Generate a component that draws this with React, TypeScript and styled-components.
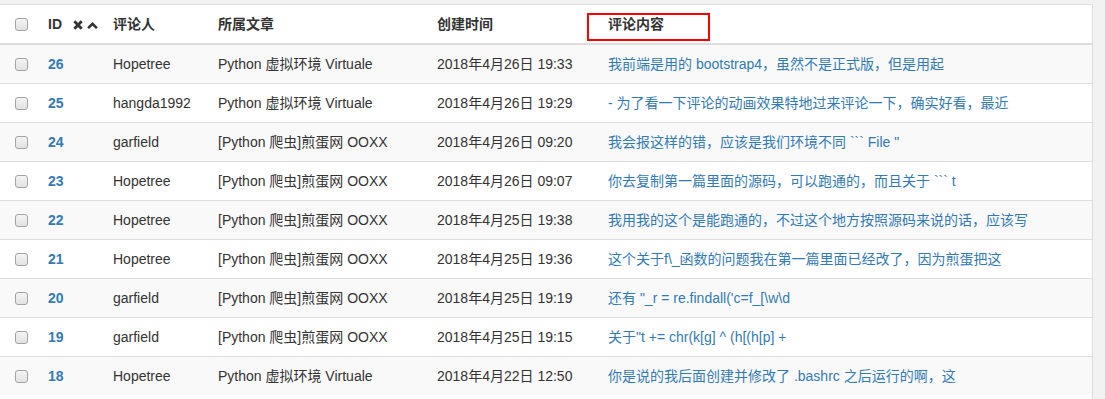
import React from "react";
import styled, { createGlobalStyle } from "styled-components";

const Global = createGlobalStyle`
  html, body { margin: 0; padding: 0; background: #f2f2f2; }
  body {
    font-family: "Liberation Sans", Arial, "Noto Sans CJK SC", sans-serif;
    font-size: 14px;
    color: #333;
  }
`;

const Page = styled.div`
  padding-top: 4px;
  width: 1105px;
  height: 399px;
  overflow: hidden;
  box-sizing: border-box;
`;

const Panel = styled.div`
  width: 1093px;
  background: #fff;
  border-top: 1px solid #ddd;
  border-right: 1px solid #ddd;
  box-sizing: border-box;
  min-height: 400px;
`;

const Table = styled.table`
  width: 1092px;
  border-collapse: separate;
  border-spacing: 0;
  table-layout: fixed;
`;

const Th = styled.th<{ $w?: number }>`
  position: relative;
  box-sizing: border-box;
  text-align: left;
  font-weight: bold;
  line-height: 20px;
  height: 40px;
  padding: 9px 8px;
  border-bottom: 2px solid #ddd;
  white-space: nowrap;
  vertical-align: middle;
  ${(p) => (p.$w ? `width: ${p.$w}px;` : "")}
`;

const Row = styled.tr<{ $striped: boolean }>`
  background: ${(p) => (p.$striped ? "#f9f9f9" : "#fff")};
`;

const Td = styled.td`
  box-sizing: border-box;
  height: 38px;
  padding: 9px 8px;
  line-height: 20px;
  white-space: nowrap;
  overflow: hidden;
  vertical-align: middle;
  tr + tr > & {
    border-top: 1px solid #ddd;
    height: 39px;
  }
`;

const CheckCell = styled(Td)`
  padding-left: 15px;
  padding-right: 0;
`;

const CheckTh = styled(Th)`
  padding-left: 15px;
  padding-right: 0;
`;

const Check = styled.span`
  display: block;
  width: 13px;
  height: 13px;
  box-sizing: border-box;
  border: 1px solid #a3a3a3;
  border-radius: 3px;
  background: linear-gradient(#f4f4f4, #e2e2e2);
`;

const IdLink = styled.a`
  color: #337ab7;
  font-weight: bold;
  text-decoration: none;
`;

const CommentLink = styled.a`
  color: #337ab7;
  text-decoration: none;
`;

const SortIcons = styled.span`
  display: inline-flex;
  align-items: center;
  gap: 4px;
  margin-left: 11px;
  vertical-align: -1px;
`;

const Highlight = styled.div`
  position: absolute;
  left: -13px;
  top: 8px;
  width: 123px;
  height: 28px;
  border: 2px solid #f00;
  box-sizing: border-box;
  pointer-events: none;
`;

const rows = [
  { id: 26, user: "Hopetree", art: "Python 虚拟环境 Virtuale", time: "2018年4月26日 19:33", text: "我前端是用的 bootstrap4，虽然不是正式版，但是用起" },
  { id: 25, user: "hangda1992", art: "Python 虚拟环境 Virtuale", time: "2018年4月26日 19:29", text: "- 为了看一下评论的动画效果特地过来评论一下，确实好看，最近" },
  { id: 24, user: "garfield", art: "[Python 爬虫]煎蛋网 OOXX", time: "2018年4月26日 09:20", text: "我会报这样的错，应该是我们环境不同 ``` File \"" },
  { id: 23, user: "Hopetree", art: "[Python 爬虫]煎蛋网 OOXX", time: "2018年4月26日 09:07", text: "你去复制第一篇里面的源码，可以跑通的，而且关于 ``` t" },
  { id: 22, user: "Hopetree", art: "[Python 爬虫]煎蛋网 OOXX", time: "2018年4月25日 19:38", text: "我用我的这个是能跑通的，不过这个地方按照源码来说的话，应该写" },
  { id: 21, user: "Hopetree", art: "[Python 爬虫]煎蛋网 OOXX", time: "2018年4月25日 19:36", text: "这个关于f\\_函数的问题我在第一篇里面已经改了，因为煎蛋把这" },
  { id: 20, user: "garfield", art: "[Python 爬虫]煎蛋网 OOXX", time: "2018年4月25日 19:19", text: "还有 \"_r = re.findall('c=f_[\\w\\d" },
  { id: 19, user: "garfield", art: "[Python 爬虫]煎蛋网 OOXX", time: "2018年4月25日 19:15", text: "关于\"t += chr(k[g] ^ (h[(h[p] +" },
  { id: 18, user: "Hopetree", art: "Python 虚拟环境 Virtuale", time: "2018年4月22日 12:50", text: "你是说的我后面创建并修改了 .bashrc 之后运行的啊，这" },
];

const CloseIcon = () => (
  <svg width="10" height="10" viewBox="0 0 10 10">
    <path d="M1.3 1.3 L8.7 8.7 M8.7 1.3 L1.3 8.7" stroke="#333" strokeWidth="2.8" strokeLinecap="butt" />
  </svg>
);

const UpIcon = () => (
  <svg width="11" height="7" viewBox="0 0 11 7">
    <path d="M1.1 6.2 L5.5 1.8 L9.9 6.2" stroke="#333" strokeWidth="2.5" fill="none" />
  </svg>
);

export default function App() {
  return (
    <>
      <Global />
      <Page>
        <Panel>
          <Table>
            <thead>
              <tr>
                <CheckTh $w={40}><Check /></CheckTh>
                <Th $w={65}>
                  ID
                  <SortIcons>
                    <CloseIcon />
                    <UpIcon />
                  </SortIcons>
                </Th>
                <Th $w={105}>评论人</Th>
                <Th $w={219}>所属文章</Th>
                <Th $w={171}>创建时间</Th>
                <Th>
                  评论内容
                  <Highlight />
                </Th>
              </tr>
            </thead>
            <tbody>
              {rows.map((r, i) => (
                <Row key={r.id} $striped={i % 2 === 0}>
                  <CheckCell><Check /></CheckCell>
                  <Td><IdLink href="#">{r.id}</IdLink></Td>
                  <Td>{r.user}</Td>
                  <Td>{r.art}</Td>
                  <Td>{r.time}</Td>
                  <Td><CommentLink href="#">{r.text}</CommentLink></Td>
                </Row>
              ))}
            </tbody>
          </Table>
        </Panel>
      </Page>
    </>
  );
}
